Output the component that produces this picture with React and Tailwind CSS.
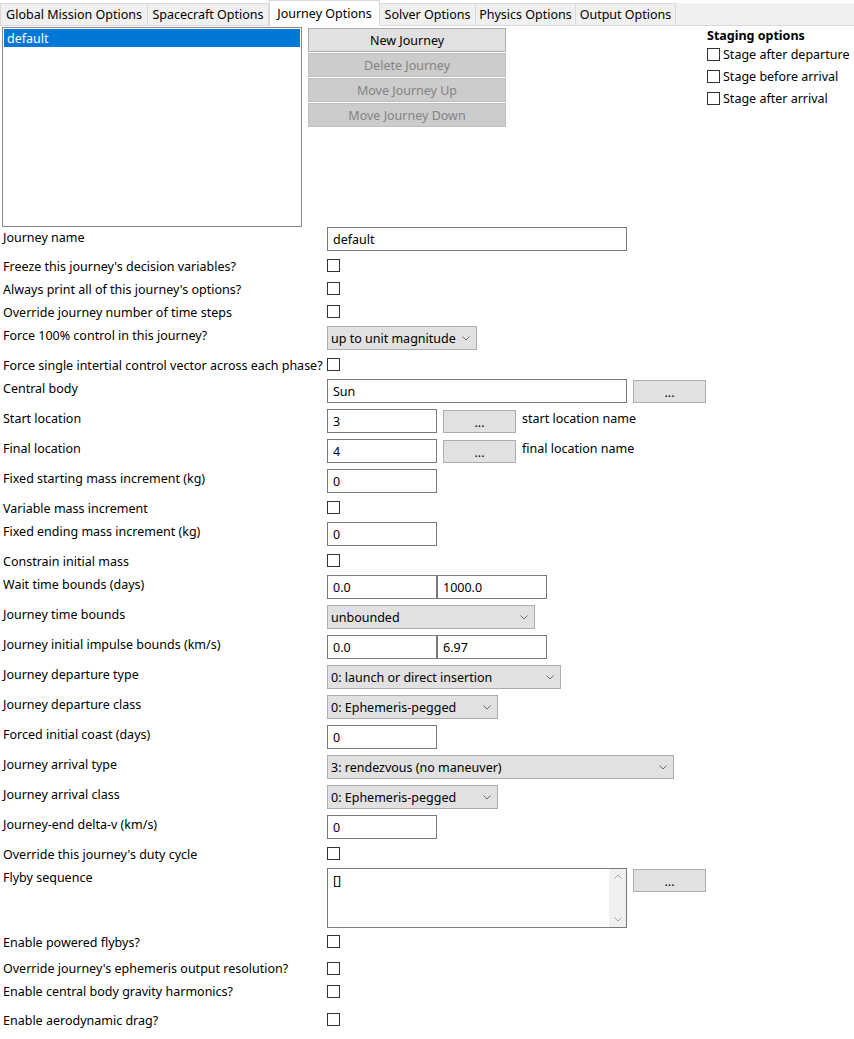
import React from "react";

const font = { fontFamily: '"Noto Sans", "Open Sans", sans-serif' };

function Chevron() {
  return (
    <svg width="8" height="5" viewBox="0 0 8 5" className="shrink-0">
      <path d="M0.5 0.5 L4 4 L7.5 0.5" fill="none" stroke="#6d6d6d" strokeWidth="1" />
    </svg>
  );
}

function Input({ w, value, mt = 0 }) {
  return (
    <div
      className="h-[24px] border border-[#7a7a7a] bg-white pl-[5px] pt-[2px] flex items-center shrink-0 text-black"
      style={{ width: w, marginTop: mt }}
    >
      {value}
    </div>
  );
}

function Select({ w, value }) {
  return (
    <div
      className="h-[24px] border border-[#adadad] bg-[#e1e1e1] pl-[3px] pr-[6px] flex items-center justify-between shrink-0 text-black"
      style={{ width: w }}
    >
      <span className="pt-[3px]">{value}</span>
      <Chevron />
    </div>
  );
}

function DotBtn() {
  return (
    <div className="mt-[1px] h-[23px] w-[73px] border border-[#adadad] bg-[#e1e1e1] flex items-center justify-center shrink-0 text-black leading-none pt-[4px]">
      ...
    </div>
  );
}

function Check({ mt = 1 }) {
  return <div className="w-[13px] h-[13px] border border-[#333333] bg-white shrink-0" style={{ marginTop: mt }} />;
}

function Row({ label, h, lmt = 1, children }) {
  return (
    <div className="flex items-start shrink-0" style={{ height: h }}>
      <div className="w-[327px] pl-[3px] leading-[16px] shrink-0 whitespace-nowrap" style={{ marginTop: lmt + 1 }}>
        {label}
      </div>
      <div className="flex items-start">{children}</div>
    </div>
  );
}

const tabs = [
  { t: "Global Mission Options", w: 148 },
  { t: "Spacecraft Options", w: 122 },
  { t: "Journey Options", w: 111, active: true },
  { t: "Solver Options", w: 97 },
  { t: "Physics Options", w: 101 },
  { t: "Output Options", w: 101 },
];

function TopButton({ children, disabled }) {
  return (
    <div
      className={
        "h-[24px] w-[198px] border flex items-center justify-center pt-[2px] " +
        (disabled
          ? "bg-[#cccccc] border-[#bfbfbf] text-[#838383]"
          : "bg-[#e1e1e1] border-[#adadad] text-black")
      }
    >
      {children}
    </div>
  );
}

export default function App() {
  return (
    <div className="w-[854px] h-[1039px] bg-white text-[12.5px] text-black overflow-hidden" style={font}>
      {/* tab strip */}
      <div className="flex items-end h-[26px] bg-white">
        {tabs.map((tb) =>
          tb.active ? (
            <div
              key={tb.t}
              className="h-[26px] bg-white border border-b-0 border-[#d9d9d9] flex items-center justify-center pt-[1px] shrink-0 whitespace-nowrap"
              style={{ width: tb.w }}
            >
              {tb.t}
            </div>
          ) : (
            <div
              key={tb.t}
              className="h-[23px] bg-[#f0f0f0] border border-[#d9d9d9] -ml-[1px] first:ml-0 flex items-center justify-center pt-[2px] shrink-0 whitespace-nowrap"
              style={{ width: tb.w }}
            >
              {tb.t}
            </div>
          )
        )}
        <div className="flex-1 h-[23px] bg-[#f0f0f0] border-b border-[#d9d9d9]" />
      </div>

      {/* top section */}
      <div className="flex items-start h-[201px] pt-[1px]">
        <div className="ml-[2px] w-[300px] h-[200px] border border-[#828790] bg-white p-[1px] shrink-0">
          <div className="h-[18px] bg-[#0078d7] text-white pl-[3px] pt-[2px] flex items-center">default</div>
        </div>
        <div className="ml-[6px] mt-[1px] flex flex-col gap-[1px]">
          <TopButton>New Journey</TopButton>
          <TopButton disabled>Delete Journey</TopButton>
          <TopButton disabled>Move Journey Up</TopButton>
          <TopButton disabled>Move Journey Down</TopButton>
        </div>
        <div className="ml-[201px] mt-[1px] flex flex-col whitespace-nowrap">
          <div className="font-bold leading-[16px]">Staging options</div>
          <div className="flex items-center h-[22px] gap-[3px]">
            <Check mt={-1} />
            <span>Stage after departure</span>
          </div>
          <div className="flex items-center h-[22px] gap-[3px]">
            <Check mt={-1} />
            <span>Stage before arrival</span>
          </div>
          <div className="flex items-center h-[22px] gap-[3px]">
            <Check mt={-1} />
            <span>Stage after arrival</span>
          </div>
        </div>
      </div>

      {/* form rows */}
      <div className="flex flex-col">
        <Row label="Journey name" h={31} lmt={2}>
          <Input w={300} value="default" />
        </Row>
        <Row label="Freeze this journey's decision variables?" h={23} lmt={0}>
          <Check />
        </Row>
        <Row label="Always print all of this journey's options?" h={23} lmt={0}>
          <Check />
        </Row>
        <Row label="Override journey number of time steps" h={22} lmt={0}>
          <Check />
        </Row>
        <Row label="Force 100% control in this journey?" h={31} lmt={1}>
          <Select w={150} value="up to unit magnitude" />
        </Row>
        <Row label="Force single intertial control vector across each phase?" h={22} lmt={0}>
          <Check />
        </Row>
        <Row label="Central body" h={30} lmt={1}>
          <Input w={300} value="Sun" />
          <div className="w-[6px]" />
          <DotBtn />
        </Row>
        <Row label="Start location" h={30} lmt={1}>
          <Input w={110} value="3" />
          <div className="w-[6px]" />
          <DotBtn />
          <div className="ml-[6px] mt-[2px] leading-[16px] whitespace-nowrap">start location name</div>
        </Row>
        <Row label="Final location" h={30} lmt={1}>
          <Input w={110} value="4" />
          <div className="w-[6px]" />
          <DotBtn />
          <div className="ml-[6px] mt-[2px] leading-[16px] whitespace-nowrap">final location name</div>
        </Row>
        <Row label="Fixed starting mass increment (kg)" h={31} lmt={1}>
          <Input w={110} value="0" />
        </Row>
        <Row label="Variable mass increment" h={22} lmt={0}>
          <Check />
        </Row>
        <Row label="Fixed ending mass increment (kg)" h={31} lmt={1}>
          <Input w={110} value="0" />
        </Row>
        <Row label="Constrain initial mass" h={22} lmt={0}>
          <Check />
        </Row>
        <Row label="Wait time bounds (days)" h={30} lmt={1}>
          <Input w={110} value="0.0" />
          <Input w={110} value="1000.0" />
        </Row>
        <Row label="Journey time bounds" h={30} lmt={1}>
          <Select w={208} value="unbounded" />
        </Row>
        <Row label="Journey initial impulse bounds (km/s)" h={30} lmt={1}>
          <Input w={110} value="0.0" />
          <Input w={110} value="6.97" />
        </Row>
        <Row label="Journey departure type" h={30} lmt={1}>
          <Select w={234} value="0: launch or direct insertion" />
        </Row>
        <Row label="Journey departure class" h={30} lmt={1}>
          <Select w={171} value="0: Ephemeris-pegged" />
        </Row>
        <Row label="Forced initial coast (days)" h={30} lmt={1}>
          <Input w={110} value="0" />
        </Row>
        <Row label="Journey arrival type" h={30} lmt={1}>
          <Select w={347} value="3: rendezvous (no maneuver)" />
        </Row>
        <Row label="Journey arrival class" h={30} lmt={1}>
          <Select w={171} value="0: Ephemeris-pegged" />
        </Row>
        <Row label="Journey-end delta-v (km/s)" h={31} lmt={1}>
          <Input w={110} value="0" />
        </Row>
        <Row label="Override this journey's duty cycle" h={22} lmt={0}>
          <Check />
        </Row>
        <Row label="Flyby sequence" h={66} lmt={1}>
          <div className="w-[300px] h-[60px] border border-[#7a7a7a] bg-white flex shrink-0">
            <div className="flex-1 pl-[5px] pt-[4px] leading-[16px]">[]</div>
            <div className="w-[17px] bg-[#f0f0f0] flex flex-col items-center justify-between py-[5px]">
              <svg width="8" height="5" viewBox="0 0 8 5">
                <path d="M0.5 4.5 L4 1 L7.5 4.5" fill="none" stroke="#a3a3a3" strokeWidth="1" />
              </svg>
              <svg width="8" height="5" viewBox="0 0 8 5">
                <path d="M0.5 0.5 L4 4 L7.5 0.5" fill="none" stroke="#a3a3a3" strokeWidth="1" />
              </svg>
            </div>
          </div>
          <div className="w-[6px]" />
          <DotBtn />
        </Row>
        <Row label="Enable powered flybys?" h={26} lmt={0}>
          <Check />
        </Row>
        <Row label="Override journey's ephemeris output resolution?" h={23} lmt={0}>
          <Check mt={2} />
        </Row>
        <Row label="Enable central body gravity harmonics?" h={29} lmt={0}>
          <Check mt={2} />
        </Row>
        <Row label="Enable aerodynamic drag?" h={27} lmt={0}>
          <Check />
        </Row>
      </div>
    </div>
  );
}
